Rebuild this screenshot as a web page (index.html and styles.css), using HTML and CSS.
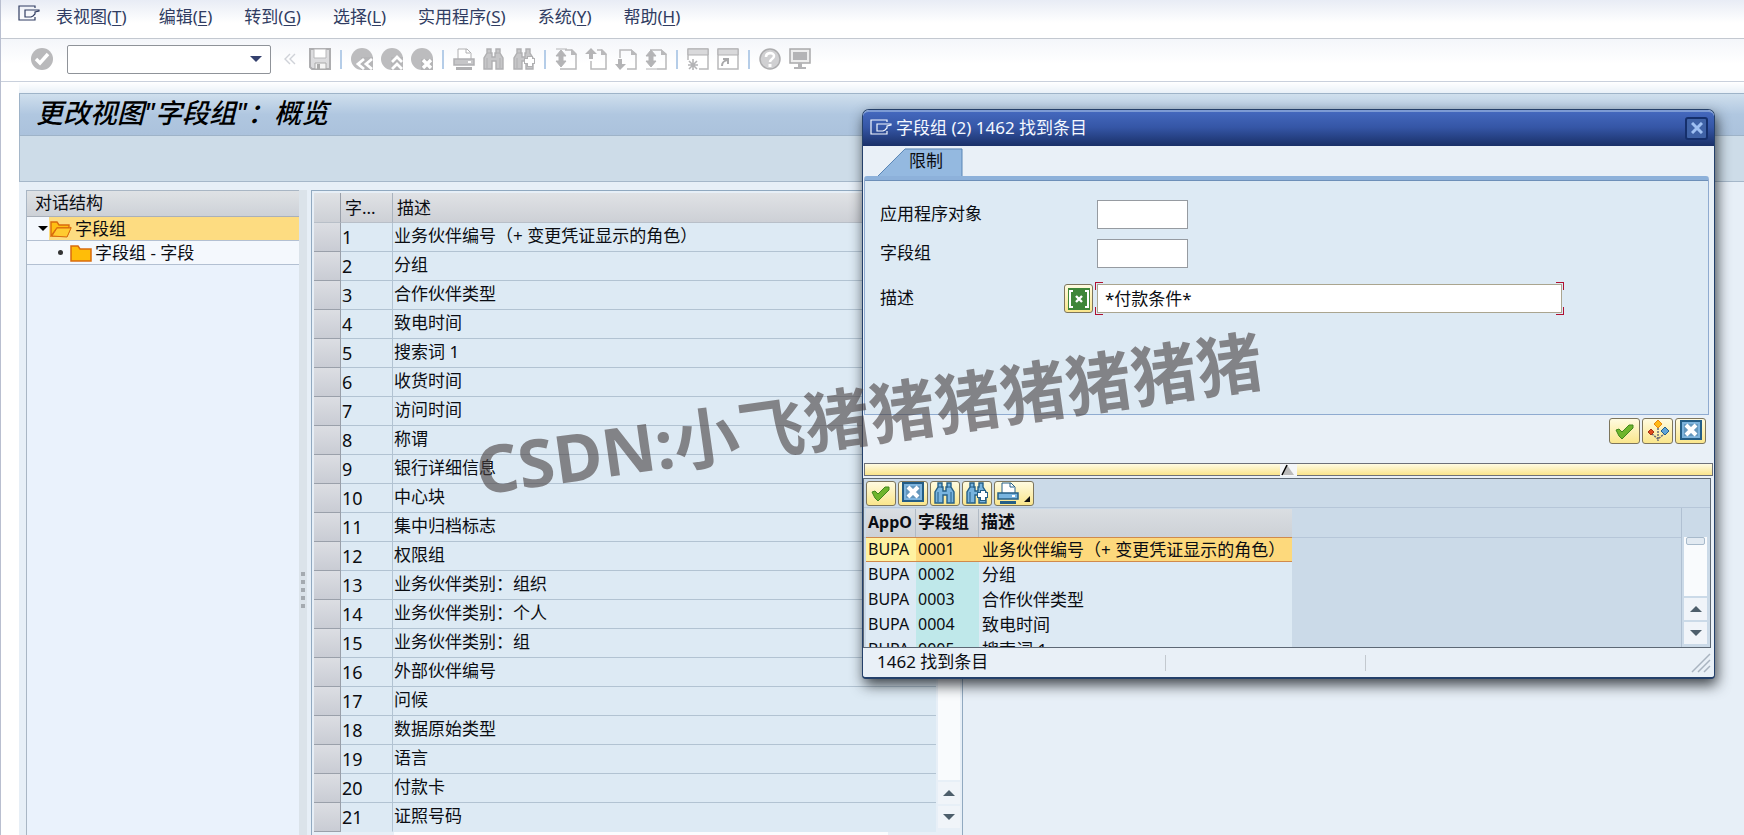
FILE: index.html
```html
<!DOCTYPE html>
<html lang="zh-CN">
<head>
<meta charset="utf-8">
<title>更改视图“字段组”：概览</title>
<link rel="stylesheet" href="styles.css">
</head>
<body>
<svg class="sprite" aria-hidden="true">
  <symbol id="exit" viewBox="0 0 22 18"><path d="M17 3V1H1v14h16v-3" fill="none" stroke="currentColor" stroke-width="1.2"/><path d="M7 5h14v1l-4 1v2l-2 2-2 1H7z" fill="none" stroke="currentColor" stroke-width="1.2"/></symbol>
  <symbol id="ok" viewBox="0 0 22 22"><circle cx="11" cy="11" r="11" fill="#b9b9bb"/><path d="M5 11l4 4 8-9" fill="none" stroke="#fff" stroke-width="3.4"/></symbol>
  <symbol id="chev" viewBox="0 0 12 12"><path d="M6 1L1 6l5 5M11 1L6 6l5 5" fill="none" stroke="#cfd2d8" stroke-width="1.4"/></symbol>
  <symbol id="save" viewBox="0 0 22 22"><path d="M1 1h20v20H3l-2-2z" fill="#dcdcde" stroke="#aeaeb0" stroke-width="2"/><path d="M5 1h12v9H5z" fill="#fff" stroke="#b8b8ba"/><path d="M6 15h11v6H6z" fill="#f5f5f5" stroke="#aaa"/><path d="M8 16h3v5H8z" fill="#aaa"/></symbol>
  <symbol id="back" viewBox="0 0 22 22"><circle cx="11" cy="11" r="11" fill="#bcbcbe"/><path d="M10 9h12v13H10z" fill="#b6b6b8"/><path d="M13 11l-6 5 6 5M21 11l-6 5 6 5" fill="none" stroke="#fff" stroke-width="2.8"/></symbol>
  <symbol id="up" viewBox="0 0 22 22"><circle cx="11" cy="11" r="11" fill="#bcbcbe"/><path d="M10 9h12v13H10z" fill="#b6b6b8"/><path d="M11 14l5-5 5 5M11 21l5-5 5 5" fill="none" stroke="#fff" stroke-width="2.8"/></symbol>
  <symbol id="cancel" viewBox="0 0 22 22"><circle cx="11" cy="11" r="11" fill="#bcbcbe"/><path d="M10 11h12v11H10z" fill="#b4b4b6"/><path d="M12 12l8 8M20 12l-8 8" stroke="#fff" stroke-width="3.4"/></symbol>
  <symbol id="print" viewBox="0 0 22 22"><path d="M5 11V1h9l4 4v6" fill="#fff" stroke="var(--line)"/><path d="M13 1v4h4" fill="none" stroke="var(--line)"/><path d="M1 11h20v6H1z" fill="var(--fill)" stroke="var(--line)" stroke-width="1.5"/><path d="M3 20.500h16" stroke="var(--line)" stroke-width="3"/><path d="M15 14h3" stroke="#fff" stroke-width="2"/></symbol>
  <symbol id="find" viewBox="0 0 22 22"><path d="M4 1h4v4h1v4h3V5h1V1h4v4l3 5v11h-7v-8h-4v8H1V10l3-5z" fill="var(--fill)" stroke="var(--line)" stroke-width="1.4"/><path d="M4 5h4M13 5h4M4 10v10M17 10v10" stroke="var(--line)"/></symbol>
  <symbol id="findnext" viewBox="0 0 22 22"><path d="M4 1h4v4h1v4h3V5h1V1h4v4l3 5v11h-7v-8h-4v8H1V10l3-5z" fill="var(--fill)" stroke="var(--line)" stroke-width="1.4"/><path d="M4 5h4M4 10v10" stroke="var(--line)"/><path d="M17 8v11M11 13h11" stroke="var(--line)" stroke-width="6"/><path d="M17 9v9M12 13h9" stroke="#fff" stroke-width="4"/></symbol>
  <symbol id="first" viewBox="0 0 22 22"><path d="M10 2h7l4 4v15H5" fill="none" stroke="#b9b9bb" stroke-width="1.5"/><path d="M16 1v6h6z" fill="#b9b9bb"/><path d="M1 1h11M6 2l5 6H8v5h3l-5 6-5-6h3V8H1z" fill="#b4b4b6" stroke="#b4b4b6"/></symbol>
  <symbol id="prev" viewBox="0 0 22 22"><path d="M12 2h5l4 4v15H6v-8" fill="none" stroke="#b9b9bb" stroke-width="1.5"/><path d="M16 1v6h6z" fill="#b9b9bb"/><path d="M6 0l6 6H8v5H4V6H0z" fill="#b4b4b6"/></symbol>
  <symbol id="next" viewBox="0 0 22 22"><path d="M5 10V2h11l5 4v15h-9" fill="none" stroke="#b9b9bb" stroke-width="1.5"/><path d="M16 1v6h6z" fill="#b9b9bb"/><path d="M5 22l6-6H7v-5H3v5H0z" fill="#b4b4b6"/></symbol>
  <symbol id="last" viewBox="0 0 22 22"><path d="M5 2h11l5 4v15h-9" fill="none" stroke="#b9b9bb" stroke-width="1.5"/><path d="M16 1v6h6z" fill="#b9b9bb"/><path d="M6 2l5 6H8v5h3l-5 6-5-6h3V8H1zM1 21h11" fill="#b4b4b6" stroke="#b4b4b6"/></symbol>
  <symbol id="session" viewBox="0 0 22 22"><path d="M1 12V1h20v20h-9" fill="#fff" stroke="#b9b9bb" stroke-width="1.5"/><path d="M1 1h20v6H1z" fill="#d9d9db" stroke="#b0b0b2"/><path d="M6 11v11M1 17h10M2 13l8 8M10 13l-8 8" stroke="#b4b4b6" stroke-width="1.6"/></symbol>
  <symbol id="shortcut" viewBox="0 0 22 22"><path d="M1 1h20v20H1z" fill="#fff" stroke="#b9b9bb" stroke-width="1.5"/><path d="M1 1h20v6H1z" fill="#d9d9db" stroke="#b0b0b2"/><path d="M5 18c0-4 2-5 5-6m-4-1h5v5" fill="none" stroke="#a9a9ab" stroke-width="2"/></symbol>
  <symbol id="help" viewBox="0 0 22 22"><circle cx="11" cy="11" r="10" fill="#d0d0d2" stroke="#acacae" stroke-width="1.5"/><path d="M7 9c0-5 8-5 8-1 0 3-4 3-4 6" fill="none" stroke="#fff" stroke-width="2.6"/><path d="M11 16v3" stroke="#fff" stroke-width="3"/></symbol>
  <symbol id="monitor" viewBox="0 0 22 22"><path d="M1 1h20v14H1z" fill="#eee" stroke="#a9a9ab" stroke-width="1.5"/><path d="M4 4h14v8H4z" fill="#b4b4b6"/><path d="M9 15h4v4h4v2H5v-2h4z" fill="#b4b4b6"/></symbol>
  <symbol id="check" viewBox="0 0 22 22"><path d="M2 10l3-1 3 3 7-7h4v3l-8 8-3 3-3-3z" fill="#6eb52c" stroke="#40871f"/></symbol>
  <symbol id="close" viewBox="0 0 22 22"><path d="M1 1h20v18H1z" fill="#7db3dc" stroke="#235d86" stroke-width="2"/><path d="M4 4h14v12H4z" fill="#6497bd"/><path d="M6 5l10 10M16 5L6 15" stroke="#fff" stroke-width="4"/></symbol>
  <symbol id="multi" viewBox="0 0 22 22"><path d="M11 8v13M5 14l6 5 6-5" fill="none" stroke="#666a77" stroke-width="1.5" stroke-dasharray="2 1"/><path d="M11 0l4 4-4 4-4-4z" fill="#ffb916" stroke="#e8860c"/><path d="M4 9l3 3-3 3-3-3z" fill="#dd4b1c" stroke="#a53213"/><path d="M18 7l4 4-4 4-4-4z" fill="#5fa4d8" stroke="#245f8b"/></symbol>
  <symbol id="selection" viewBox="0 0 22 22"><path d="M0 0h22v22H0z" fill="#3e8638"/><path d="M5 3H2v16h3M17 3h3v16h-3" fill="none" stroke="#fff" stroke-width="2"/><path d="M8 8l6 6M14 8l-6 6" stroke="#fff" stroke-width="2.4"/></symbol>
  <symbol id="open" viewBox="0 0 22 18"><path d="M1 16V2h6l2 3h10v3H7L1 16h16l4-9" fill="#ffbf12" stroke="#d96b0c" stroke-width="1.4"/><path d="M2 16l5-8h14l-4 9z" fill="#ffcb30" stroke="#d96b0c"/></symbol>
  <symbol id="folder" viewBox="0 0 22 18"><path d="M1 16V2h7l2 3h11v12H1z" fill="#ffbd08" stroke="#d96b0c" stroke-width="1.5"/></symbol>
</svg>

<div class="app">
  <nav class="menu">
    <svg class="exit"><use href="#exit"/></svg>
    <a href="#">表视图(<u>T</u>)</a><a href="#">编辑(<u>E</u>)</a><a href="#">转到(<u>G</u>)</a><a href="#">选择(<u>L</u>)</a><a href="#">实用程序(<u>S</u>)</a><a href="#">系统(<u>Y</u>)</a><a href="#">帮助(<u>H</u>)</a>
  </nav>
  <div class="toolbar">
    <button class="tool" aria-label="确认"><svg><use href="#ok"/></svg></button>
    <div class="combo"><input type="text" aria-label="命令"><i class="tri down"></i></div>
    <button class="tool chev" aria-label="折叠"><svg><use href="#chev"/></svg></button>
    <button class="tool" aria-label="保存"><svg><use href="#save"/></svg></button>
    <i class="sep"></i>
    <button class="tool" aria-label="返回"><svg><use href="#back"/></svg></button>
    <button class="tool" aria-label="退出"><svg><use href="#up"/></svg></button>
    <button class="tool" aria-label="取消"><svg><use href="#cancel"/></svg></button>
    <i class="sep"></i>
    <button class="tool" aria-label="打印"><svg><use href="#print"/></svg></button>
    <button class="tool" aria-label="查找"><svg><use href="#find"/></svg></button>
    <button class="tool" aria-label="查找下一个"><svg><use href="#findnext"/></svg></button>
    <i class="sep"></i>
    <button class="tool" aria-label="首页"><svg><use href="#first"/></svg></button>
    <button class="tool" aria-label="上一页"><svg><use href="#prev"/></svg></button>
    <button class="tool" aria-label="下一页"><svg><use href="#next"/></svg></button>
    <button class="tool" aria-label="末页"><svg><use href="#last"/></svg></button>
    <i class="sep"></i>
    <button class="tool" aria-label="新会话"><svg><use href="#session"/></svg></button>
    <button class="tool" aria-label="快捷方式"><svg><use href="#shortcut"/></svg></button>
    <i class="sep"></i>
    <button class="tool" aria-label="帮助"><svg><use href="#help"/></svg></button>
    <button class="tool" aria-label="布局"><svg><use href="#monitor"/></svg></button>
  </div>

  <main class="screen">
    <h1>更改视图"字段组"：概览</h1>
    <div class="appbar"></div>
    <div class="work">
      <section class="tree">
        <h2>对话结构</h2>
        <div class="node selected"><i class="tri down"></i><a href="#"><svg><use href="#open"/></svg>字段组</a></div>
        <div class="node child"><i class="dot"></i><a href="#"><svg><use href="#folder"/></svg>字段组 - 字段</a></div>
      </section>
      <div class="splitter"><i></i><i></i><i></i><i></i><i></i></div>
      <section class="grid">
        <div class="gridmain">
          <table>
            <thead><tr><th class="rowhead"></th><th class="num">字...</th><th>描述</th></tr></thead>
            <tbody>
              <tr><td class="rowhead"></td><td class="num">1</td><td>业务伙伴编号（+ 变更凭证显示的角色）</td></tr>
              <tr><td class="rowhead"></td><td class="num">2</td><td>分组</td></tr>
              <tr><td class="rowhead"></td><td class="num">3</td><td>合作伙伴类型</td></tr>
              <tr><td class="rowhead"></td><td class="num">4</td><td>致电时间</td></tr>
              <tr><td class="rowhead"></td><td class="num">5</td><td>搜索词 1</td></tr>
              <tr><td class="rowhead"></td><td class="num">6</td><td>收货时间</td></tr>
              <tr><td class="rowhead"></td><td class="num">7</td><td>访问时间</td></tr>
              <tr><td class="rowhead"></td><td class="num">8</td><td>称谓</td></tr>
              <tr><td class="rowhead"></td><td class="num">9</td><td>银行详细信息</td></tr>
              <tr><td class="rowhead"></td><td class="num">10</td><td>中心块</td></tr>
              <tr><td class="rowhead"></td><td class="num">11</td><td>集中归档标志</td></tr>
              <tr><td class="rowhead"></td><td class="num">12</td><td>权限组</td></tr>
              <tr><td class="rowhead"></td><td class="num">13</td><td>业务伙伴类别：组织</td></tr>
              <tr><td class="rowhead"></td><td class="num">14</td><td>业务伙伴类别：个人</td></tr>
              <tr><td class="rowhead"></td><td class="num">15</td><td>业务伙伴类别：组</td></tr>
              <tr><td class="rowhead"></td><td class="num">16</td><td>外部伙伴编号</td></tr>
              <tr><td class="rowhead"></td><td class="num">17</td><td>问候</td></tr>
              <tr><td class="rowhead"></td><td class="num">18</td><td>数据原始类型</td></tr>
              <tr><td class="rowhead"></td><td class="num">19</td><td>语言</td></tr>
              <tr><td class="rowhead"></td><td class="num">20</td><td>付款卡</td></tr>
              <tr><td class="rowhead"></td><td class="num">21</td><td>证照号码</td></tr>
            </tbody>
          </table>
          <div class="vscroll"><span class="track"></span><button aria-label="向上"><i class="tri up"></i></button><button aria-label="向下"><i class="tri down"></i></button></div>
        </div>
        <div class="hscroll"><span></span></div>
      </section>
    </div>
  </main>
</div>

<div class="dialog" role="dialog" aria-label="字段组">
  <header><svg class="exit"><use href="#exit"/></svg><span>字段组 (2) 1462 找到条目</span><button class="x" aria-label="关闭"><svg viewBox="0 0 12 12"><path d="M1 1l10 10M11 1L1 11" stroke="#9fc0f2" stroke-width="3"/></svg></button></header>
  <div class="tabs"><button class="tab"><svg viewBox="0 0 86 29" preserveAspectRatio="none"><path d="M1 29L28 1h57v28" fill="#94b9e0" stroke="#5784b4"/></svg><span>限制</span></button></div>
  <form class="panel">
    <div class="field"><label for="f1">应用程序对象</label><input id="f1" type="text"></div>
    <div class="field"><label for="f2">字段组</label><input id="f2" type="text"></div>
    <div class="field wide"><label for="f3">描述</label><button type="button" class="ybtn sel" aria-label="多项选择"><svg><use href="#selection"/></svg></button><div class="focus"><input id="f3" type="text" value="*付款条件*"></div></div>
  </form>
  <div class="actions">
    <button class="ybtn" aria-label="继续"><svg><use href="#check"/></svg></button>
    <button class="ybtn" aria-label="多重选择"><svg><use href="#multi"/></svg></button>
    <button class="ybtn" aria-label="关闭"><svg><use href="#close"/></svg></button>
  </div>
  <div class="ysplit"><svg viewBox="0 0 17 12"><path d="M0 0h17v12H0z" fill="#f4f6f8"/><path d="M7 1l7 10H3z" fill="#bbb"/><path d="M2 11L7 1" stroke="#000" stroke-width="1.5"/></svg></div>
  <section class="results">
    <div class="rbar">
      <button class="ybtn" aria-label="继续"><svg><use href="#check"/></svg></button>
      <button class="ybtn" aria-label="关闭"><svg><use href="#close"/></svg></button>
      <button class="ybtn" aria-label="查找"><svg><use href="#find"/></svg></button>
      <button class="ybtn" aria-label="查找下一个"><svg><use href="#findnext"/></svg></button>
      <button class="ybtn printer" aria-label="打印"><svg><use href="#print"/></svg><i class="corner"></i></button>
    </div>
    <div class="rbody">
      <div class="rlist">
        <table>
          <thead><tr><th class="app-col">AppO</th><th class="key-col">字段组</th><th>描述</th></tr></thead>
          <tbody>
            <tr class="selected"><td>BUPA</td><td>0001</td><td>业务伙伴编号（+ 变更凭证显示的角色）</td></tr>
            <tr><td>BUPA</td><td>0002</td><td>分组</td></tr>
            <tr><td>BUPA</td><td>0003</td><td>合作伙伴类型</td></tr>
            <tr><td>BUPA</td><td>0004</td><td>致电时间</td></tr>
            <tr><td>BUPA</td><td>0005</td><td>搜索词 1</td></tr>
          </tbody>
        </table>
      </div>
      <div class="vscroll"><span class="track"><b></b></span><button aria-label="向上"><i class="tri up"></i></button><button aria-label="向下"><i class="tri down"></i></button></div>
    </div>
  </section>
  <footer><span>1462 找到条目</span><span></span><span></span><svg viewBox="0 0 20 20"><path d="M1 19L19 1M7 19L19 7M13 19l6-6" stroke="#a9b4c0" stroke-width="1.5"/></svg></footer>
</div>
<div class="watermark">CSDN:小飞猪猪猪猪猪猪猪</div>
</body>
</html>
```
FILE: styles.css
```css
* { box-sizing: border-box; }
body {
  margin: 0;
  position: relative;
  min-height: 100vh;
  overflow: hidden;
  background: #e7eff7;
  color: #0b0d12;
  font: 17px/24px "Noto Sans", "Noto Sans CJK SC", sans-serif;
  --fill: #c6c6c8;
  --line: #b0b0b2;
}
button, input { font: inherit; color: inherit; }
button { padding: 0; border: 0; background: none; }
a { color: inherit; text-decoration: none; }
table { border-collapse: separate; border-spacing: 0; table-layout: fixed; }
td, th { padding: 0; text-align: left; font-weight: 400; white-space: nowrap; }
svg { display: block; flex: none; }
.sprite { position: absolute; width: 0; height: 0; }
.app { display: flex; flex-direction: column; height: 100vh; overflow: hidden; border-left: 1px solid #b9bfd0; }

.tri { display: block; width: 0; border: 6px solid transparent; }
.tri.down { border-top-color: #4d5e6b; border-bottom: 0; }
.tri.up { border-bottom-color: #4d5e6b; border-top: 0; }

.menu {
  display: flex;
  gap: 32px;
  height: 39px;
  flex: none;
  padding: 5px 17px;
  border-bottom: 1px solid #c3c8d0;
  background: linear-gradient(#e8ecf5, #fff 60%);
  color: #303c62;
}
.exit { width: 22px; height: 18px; }
.menu .exit { margin-right: -16px; }
.menu u { text-underline-offset: 2px; text-decoration-thickness: 1px; }

.toolbar {
  display: flex;
  align-items: center;
  gap: 8px;
  flex: none;
  height: 43px;
  padding: 0 30px 2px;
  border-bottom: 1px solid #c9d0dc;
  background: linear-gradient(#f4f6fa, #fff 60%);
}
.tool, .tool svg { width: 22px; height: 22px; }
.chev { display: grid; place-items: center; }
.chev svg { width: 12px; height: 12px; }
.sep { width: 2px; height: 19px; margin: 0 1px; background: #b5cde8; }
.combo {
  display: flex;
  align-items: center;
  width: 204px;
  height: 29px;
  margin: 0 0 0 6px;
  padding-right: 8px;
  border: 1px solid #8f9399;
  border-radius: 2px;
  background: #fff;
}
.combo input { flex: 1; min-width: 0; border: 0; background: none; }
.combo .tri { border-top-color: #34406e; }

.screen {
  display: flex;
  flex-direction: column;
  flex: 1;
  margin-left: 18px;
  padding-top: 11px;
  background: linear-gradient(#fff, #e7eff7 12px);
  box-shadow: -18px 0 #fff;
}
h1 {
  flex: none;
  margin: 0;
  height: 43px;
  padding: 0 16px;
  border: 1px solid #9eb3c8;
  border-right: 0;
  background: linear-gradient(#cfdfed, #b0c7e0 50%, #abc2dc);
  font: italic 500 27px/38px "Noto Sans", "Noto Sans CJK SC", sans-serif;
  color: #000;
}
.appbar { flex: none; height: 46px; border: 1px solid #a5b7c9; border-top: 0; border-right: 0; background: #cddce8; }
.work { display: flex; flex: 1; padding: 8px 0 0 7px; }

.tree { width: 273px; border: 1px solid #a9b6c4; border-right: 0; border-bottom: 0; background: #eaf2fc; }
.tree h2 { margin: 0; height: 26px; padding-left: 8px; border-bottom: 1px solid #a9b0ba; background: linear-gradient(#dfe2e5, #cdd1d7); font-size: 17px; font-weight: 400; }
.node { display: flex; align-items: center; height: 24px; border-bottom: 1px solid #b3c0d2; background: #f4f8fd; }
.node a { display: flex; align-items: center; flex: 1; height: 23px; gap: 3px; padding-left: 1px; white-space: nowrap; }
.node svg { width: 22px; height: 18px; }
.node .tri { margin: 0 1px 0 11px; border-width: 5px; border-bottom-width: 0; border-top-color: #000; }
.selected.node a { background: #fddc81; }
.dot { width: 5px; height: 5px; margin: 0 6px 0 31px; border-radius: 3px; background: #333; }

.splitter { display: flex; flex-direction: column; align-items: center; justify-content: center; gap: 4px; width: 8px; margin: 0 4px 0 0; padding-top: 152px; background: #dbe3ea; }
.splitter i { width: 4px; height: 4px; background: #a4aab0; }

.grid { display: flex; flex-direction: column; width: 652px; padding: 2px 2px 0; border: 1px solid #91a9c0; border-bottom: 0; background: #e7eff7; }
.gridmain { display: flex; justify-content: space-between; }
.grid table { width: 622px; }
.grid th { height: 30px; background: linear-gradient(#e0e2e5, #cdd0d6); border-bottom: 1px solid #b8bfc8; border-right: 1px solid #a9b3be; padding-left: 4px; }
.grid td { height: 29px; background: #ddeaf4; border-bottom: 1px solid #b2c3d2; padding: 0 0 2px 1px; }
.grid td.num { border-right: 1px solid #b2c3d2; font-size: 18px; padding-bottom: 0; }
.grid tr:last-child td { border-bottom-color: #ddeaf4; }
.num { width: 52px; }
.grid .rowhead { width: 27px; border-right: 1px solid #9aa0aa; }
.grid tr td.rowhead { background: linear-gradient(#dcdee3, #c9ccd4); border-bottom-color: #9aa0aa; }
.grid th:last-child { border-right: 0; }

.vscroll { display: flex; flex-direction: column; gap: 2px; width: 22px; padding-bottom: 4px; }
.vscroll .track { flex: 1; background: #f9fbfd; }
.vscroll button { display: grid; place-items: center; height: 22px; background: #f0f4f9; }
.hscroll { padding: 0 0 0 80px; }
.hscroll span { display: block; width: 494px; height: 6px; background: #fbfcfe; }

.dialog {
  position: absolute;
  top: 109px;
  left: 862px;
  right: 29px;
  padding: 0 1px;
  border: 1px solid #24406a;
  border-bottom-width: 2px;
  border-radius: 7px 7px 4px 4px;
  background: #e9f0f7;
  box-shadow: 2px 6px 14px rgba(20, 25, 30, .8);
}
.dialog header {
  display: flex;
  align-items: center;
  gap: 4px;
  height: 36px;
  margin: 0 -1px;
  padding: 0 6px 2px 7px;
  border-top: 2px solid #7d9bd4;
  border-radius: 6px 6px 0 0;
  background: linear-gradient(#4468bd, #3556a6 45%, #1a3068);
  color: #f4f8ff;
}
.x { display: grid; place-items: center; width: 23px; height: 23px; margin-left: auto; border: 2px solid #152f6b; border-radius: 3px; background: #3f62a6; }
.x svg { width: 12px; height: 12px; }
.tabs { display: flex; height: 30px; padding: 2px 13px 0; }
.tab { position: relative; width: 86px; height: 28px; padding: 0 0 2px 12px; }
.tab svg { position: absolute; inset: 0; width: 100%; height: 100%; }
.tab span { position: relative; }
.panel { height: 239px; margin-right: 4px; padding: 20px 15px; border: 1px solid #8fabd0; border-top: 4px solid #8db1da; border-radius: 3px 3px 0 0; background: #ddeaf4; box-shadow: inset 0 1px #6d8fb8; }
.field { display: flex; align-items: center; height: 29px; margin-bottom: 10px; }
.field label { width: 217px; padding-bottom: 2px; }
.field input { width: 91px; height: 29px; padding: 0 7px 2px; border: 1px solid #969ba1; background: #fff; }
.wide { margin-top: 16px; }
.wide label { width: 184px; }
.ybtn { display: grid; place-items: center; width: 31px; height: 26px; border: 1px solid #7d755c; border-radius: 3px; background: linear-gradient(#fffbe0, #fae68c); --fill: #78b4df; --line: #245f87; }
.ybtn svg { width: 22px; height: 22px; }
.ybtn.sel { width: 29px; height: 29px; margin-right: 2px; }
.focus {
  width: 469px;
  padding: 2px;
  --c: #b01030;
  background:
    linear-gradient(var(--c), var(--c)) 0 0 / 8px 1px, linear-gradient(var(--c), var(--c)) 0 0 / 1px 8px,
    linear-gradient(var(--c), var(--c)) 100% 0 / 8px 1px, linear-gradient(var(--c), var(--c)) 100% 0 / 1px 8px,
    linear-gradient(var(--c), var(--c)) 0 100% / 8px 1px, linear-gradient(var(--c), var(--c)) 0 100% / 1px 8px,
    linear-gradient(var(--c), var(--c)) 100% 100% / 8px 1px, linear-gradient(var(--c), var(--c)) 100% 100% / 1px 8px;
  background-repeat: no-repeat;
}
.focus input { display: block; width: 100%; border-color: #aaa58f; }
.actions { display: flex; justify-content: flex-end; gap: 2px; height: 48px; padding: 3px 7px; }
.ysplit { display: grid; place-items: center; height: 13px; border: 1px solid #6d7078; background: linear-gradient(#fffbe3, #f9e48c); }
.ysplit svg { width: 17px; height: 12px; }

.results { display: flex; flex-direction: column; height: 170px; margin: 2px 2px 0 -1px; border: 1px solid #5d6875; background: #cbdae8; }
.rbar { display: flex; align-items: center; gap: 2px; flex: none; height: 29px; padding: 0 2px; border-bottom: 1px solid #b6c6d8; }
.rbar .ybtn { width: 30px; height: 25px; }
.rbar .printer { display: flex; align-items: center; width: 40px; padding-left: 2px; }
.corner { align-self: flex-end; margin: 0 0 3px 5px; border: 3px solid #111; border-top-color: transparent; border-left-color: transparent; }
.rbody { display: flex; flex: 1; min-height: 0; }
.rlist { flex: 1; overflow: hidden; padding: 1px 2px 0; border-right: 1px solid #b0c0d2; background: linear-gradient(#b6c6d8, #b6c6d8) 0 29px / 100% 1px no-repeat; }
.rlist table { width: 426px; }
.rlist th { height: 28px; padding: 0 0 2px 2px; border-right: 1px solid #b1bac4; background: linear-gradient(#dadee2, #cdd1d6); font-weight: 700; overflow: hidden; }
.rlist th:last-child { border-right: 0; }
.rlist td { height: 25px; line-height: 23px; padding: 0 0 1px 3px; background: #ddeaf4; }
.rlist td:nth-child(-n+2) { font-size: 16px; padding-left: 2px; }
.rlist td:nth-child(2) { background: #bfe8ea; }
.app-col { width: 50px; font-size: 16px; }
.key-col { width: 63px; }
.rlist .selected td { border: 1px solid #d08a4c; border-width: 1px 0; background: #fdd97c; padding-bottom: 0; }
.rlist .selected td:first-child { background: #fff2a0; }
.rbody .vscroll { width: 28px; padding: 29px 3px 3px 2px; }
.track b { display: block; height: 8px; margin: 0 2px; border: 1px solid #a8bacb; border-radius: 2px; background: #e2eaf2; }

.dialog footer { display: flex; align-items: center; height: 29px; }
.dialog footer span { width: 200px; padding-left: 13px; height: 16px; line-height: 14px; border-right: 1px solid #c3c9cf; }
.dialog footer span:first-child { width: 302px; }
.dialog footer span:nth-child(3) { flex: 1; border: 0; }
.dialog footer svg { width: 20px; height: 20px; margin-right: 2px; }

.watermark {
  position: absolute;
  top: 378px;
  left: 472px;
  white-space: nowrap;
  pointer-events: none;
  font: 700 66px/72px "Noto Sans", "Noto Sans CJK SC", sans-serif;
  color: rgba(70, 62, 62, .6);
  transform: rotate(-8deg);
}
```
